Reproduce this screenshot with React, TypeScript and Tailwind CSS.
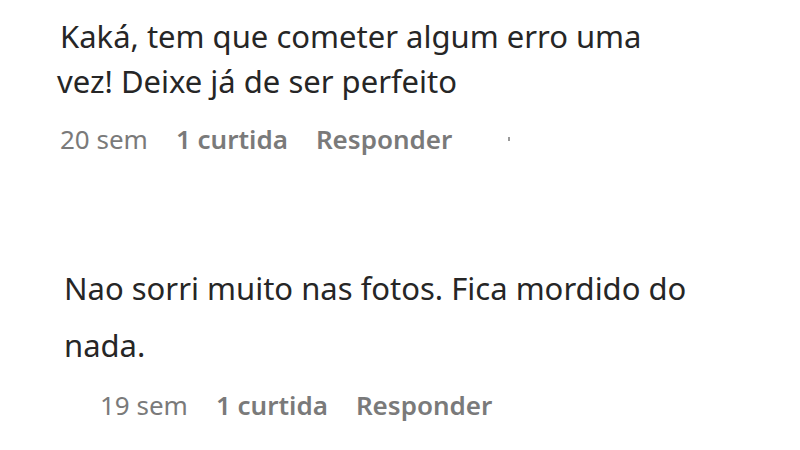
import React from 'react'

export default function App() {
    return (
        <div className="w-[800px] h-[450px] bg-white overflow-hidden" style={{ fontFamily: '"Noto Sans", "Open Sans", sans-serif' }}>
            {/* First comment */}
            <div className="pl-[60px] pt-[14px]">
                <p className="text-[31px] leading-[45px] text-[#262626]">
                    Kaká, tem que cometer algum erro uma
                    <br />
                    <span className="-ml-[3px]">vez! Deixe já de ser perfeito</span>
                </p>
                <div className="flex items-center mt-[20px] text-[26px] leading-[30px] text-[#7a7a7a]">
                    <span>20 sem</span>
                    <span className="font-semibold ml-[28px]">1 curtida</span>
                    <span className="font-semibold ml-[28px]">Responder</span>
                    <span className="ml-[56px] w-[2px] h-[4px] bg-[#9a9a9a] inline-block"></span>
                </div>
            </div>

            {/* Second comment */}
            <div className="pl-[64px] pt-[106px]">
                <p className="text-[31px] leading-[57px] text-[#262626]">
                    Nao sorri muito nas fotos. Fica mordido do
                    <br />
                    nada.
                </p>
                <div className="flex items-center mt-[16px] pl-[36px] text-[26px] leading-[30px] text-[#7a7a7a]">
                    <span>19 sem</span>
                    <span className="font-semibold ml-[28px]">1 curtida</span>
                    <span className="font-semibold ml-[28px]">Responder</span>
                </div>
            </div>
        </div>
    )
}
